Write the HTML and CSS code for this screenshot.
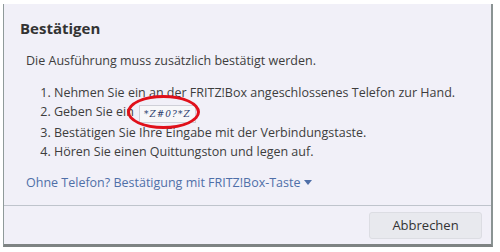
FILE: index.html
```html
<!DOCTYPE html>
<html lang="de">
<head>
  <meta charset="UTF-8">
  <title>Bestätigen</title>
  <link rel="stylesheet" href="styles.css">
</head>
<body>
  <div class="dialog">
    <h2 class="title">Bestätigen</h2>
    <div class="content">
      <p class="intro">Die Ausführung muss zusätzlich bestätigt werden.</p>
      <ol class="steps">
        <li>Nehmen Sie ein an der FRITZ!Box angeschlossenes Telefon zur Hand.</li>
        <li class="code-step">Geben Sie ein
          <span class="code-wrap">
            <span class="code">*Z#0?*Z</span>
            <span class="ring"></span>
          </span>
        </li>
        <li>Bestätigen Sie Ihre Eingabe mit der Verbindungstaste.</li>
        <li>Hören Sie einen Quittungston und legen auf.</li>
      </ol>
      <a class="toggle" href="#">Ohne Telefon? Bestätigung mit FRITZ!Box-Taste <span class="caret"></span></a>
    </div>
    <div class="footer">
      <button type="button">Abbrechen</button>
    </div>
  </div>
</body>
</html>
```

FILE: styles.css
```css
body {
  margin: 0;
  background: #fff;
  font-family: 'Open Sans', sans-serif;
  color: #3d3d3d;
}
.dialog {
  width: 487px;
  height: 240px;
  margin: 4px 0 0 3px;
  background: #f1f0f8;
  border-left: 1px solid #8f9a9a;
  border-right: 2px solid #8a9393;
  border-bottom: 3px solid #7e8383;
  display: flex;
  flex-direction: column;
}
.title {
  margin: 14px 0 0 16px;
  font-size: 15px;
  line-height: 20px;
  font-weight: 700;
  color: #333;
}
.content {
  padding-left: 22px;
  flex: 1;
}
.intro {
  margin: 14px 0 0;
  font-size: 12.5px;
  line-height: 18px;
}
.steps {
  margin: 13px 0 0;
  padding-left: 28px;
  font-size: 12.5px;
  line-height: 19px;
}
.code-wrap {
  position: relative;
  display: inline-block;
  vertical-align: middle;
  margin-left: 2px;
}
.code {
  display: inline-block;
  padding: 0 4px;
  height: 16px;
  line-height: 16px;
  background: #f7f7f9;
  border: 1px solid #cfd0d8;
  font-family: 'DejaVu Serif', serif;
  font-style: italic;
  font-size: 9px;
  letter-spacing: 1px;
  color: #2a3a6a;
}
.ring {
  position: absolute;
  left: -12px;
  top: -8px;
  width: 67px;
  height: 28px;
  border: 3.5px solid #e0101a;
  border-radius: 50%;
}
.toggle {
  display: inline-block;
  margin-top: 13px;
  font-size: 12.5px;
  color: #4f6fa8;
  text-decoration: none;
}
.caret {
  display: inline-block;
  border-left: 4px solid transparent;
  border-right: 4px solid transparent;
  border-top: 5px solid #4f6fa8;
  vertical-align: 2px;
}
.footer {
  border-top: 1px solid #bfc4cc;
  height: 38px;
  display: flex;
  justify-content: flex-end;
  align-items: center;
  padding-right: 9px;
}
button {
  width: 113px;
  height: 27px;
  background: #e8e9ee;
  border: 1px solid #dcdde3;
  border-radius: 3px;
  font-family: 'Open Sans', sans-serif;
  font-size: 13px;
  color: #333;
}
```
